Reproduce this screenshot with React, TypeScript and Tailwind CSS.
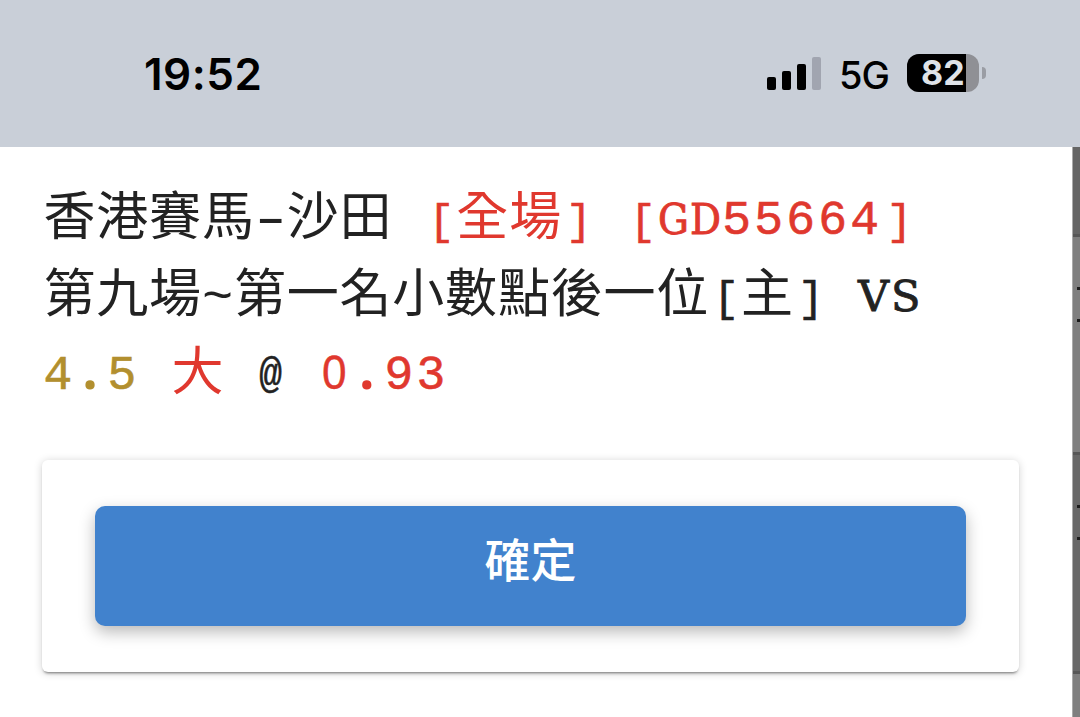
import type { ReactNode } from "react";

const bars = ["h-[13px]", "h-[19px]", "h-[26px]"];

// Rows of the page that stays dimmed behind the dialog
const rows = [
  { size: "h-[90px]", color: "bg-[#656565]", ticks: false },
  { size: "h-[218px]", color: "bg-[#7f7f7f]", ticks: true },
  { size: "h-[219px]", color: "bg-[#686868]", ticks: true },
  { size: "h-[46px]", color: "bg-[#7f7f7f]", ticks: false },
];

type Props = { children: ReactNode };

const Digits = ({ children }: Props) => (
  <span className="align-[1px] text-[48px] leading-none tracking-[3.2px] [-webkit-text-stroke:0.6px_currentColor]">
    {children}
  </span>
);

// The mono face has a dotted zero, so this one comes from the sans
const Zero = () => (
  <span className="inline-block w-[32px] pr-[5px] text-center align-[1px] font-['Liberation_Sans',sans-serif] text-[48px] leading-none tracking-normal [-webkit-text-stroke:0.4px_currentColor]">
    <span className="inline-block scale-x-92">0</span>
  </span>
);

const Dot = () => (
  <span className="inline-block w-[32px] pr-[3px] text-center align-[1px] font-['Noto_Sans',sans-serif] text-[60px] leading-none font-semibold tracking-normal">
    .
  </span>
);

const Bracket = ({ children }: Props) => (
  <span className="inline-block w-[32px] pl-[2px] text-center align-[1px] text-[43px] leading-none tracking-normal [-webkit-text-stroke:0.6px_currentColor]">
    {children}
  </span>
);

const StatusBar = () => (
  <header className="flex h-[147px] shrink-0 items-start justify-between bg-[#c9cfd8] pt-[52px] pr-[94px] pl-[144px] font-['Inter',sans-serif] text-black">
    <time className="text-[44px] leading-[44px] font-semibold tracking-[0.5px]">19:52</time>
    <div className="flex h-[42px] items-center">
      <div className="flex h-[34px] items-end gap-[6px]">
        {bars.map((h) => (
          <span key={h} className={`${h} w-[9px] rounded-[2px] bg-black`} />
        ))}
        <span className="h-[33px] w-[9px] rounded-[2px] bg-[#a1a5b0]" />
      </div>
      <span className="ml-[18px] pt-[3px] text-[38px] leading-[42px] font-medium tracking-[-1px]">5G</span>
      <div className="ml-[18px] flex items-center">
        <div className="flex h-[38px] w-[72px] items-center rounded-[12px] bg-[#8f9095]">
          <span className="h-full w-[59px] rounded-l-[12px] bg-black pl-[14px] text-[34px] leading-[38px] font-bold text-[#dfe3e8]">
            82
          </span>
        </div>
        <span className="ml-[3px] h-[12px] w-[4px] rounded-r-full bg-[#9a9da4]" />
      </div>
    </div>
  </header>
);

const App = () => {
  return (
    <div className="flex h-[717px] w-[1080px] flex-col overflow-hidden bg-white">
      <StatusBar />
      <main className="flex flex-1">
        <section className="w-[1072px] bg-white pt-[36px] pl-[42px]">
          <div className="pl-[1.5px] font-['Liberation_Mono','Noto_Sans_CJK_TC',monospace] text-[52px] leading-[77px] tracking-[0.8px] whitespace-pre text-[#222]">
            <p className="h-[77px]">
              香港賽馬
              <span className="inline-block w-[32px] text-center font-['Liberation_Sans',sans-serif] leading-none tracking-normal">
                <span className="inline-block scale-x-170">-</span>
              </span>
              沙田{" "}
              <span className="text-[#e0382e]">
                <Bracket>[</Bracket>全場<Bracket>]</Bracket> <Bracket>[</Bracket>
                <span className="align-[1px] font-['DejaVu_Serif_Condensed','DejaVu_Serif',serif] text-[43px] leading-none tracking-[1.2px] font-stretch-condensed [-webkit-text-stroke:0.8px_currentColor]">
                  GD
                </span>
                <Digits>55664</Digits>
                <Bracket>]</Bracket>
              </span>
            </p>
            <p className="h-[76px]">
              第九場~第一名小數點後一位<Bracket>[</Bracket>主<Bracket>]</Bracket>{" "}
              <span className="align-[1px] font-['DejaVu_Serif',serif] text-[43px] leading-none tracking-[2px] [-webkit-text-stroke:0.8px_currentColor]">
                VS
              </span>
            </p>
            <p className="h-[77px]">
              <span className="text-[#b28f2e]">
                <Digits>4</Digits>
                <Dot />
                <Digits>5</Digits>
              </span>{" "}
              <span className="text-[#e0382e]">大</span>{" "}
              <span className="inline-block w-[32px] pr-[4px] text-center align-[3px] text-[42px] leading-none tracking-normal [-webkit-text-stroke:0.5px_currentColor]">
                <span className="inline-block scale-x-90">@</span>
              </span>{" "}
              <span className="text-[#e0382e]">
                <Zero />
                <Dot />
                <Digits>93</Digits>
              </span>
            </p>
          </div>

          <div className="mt-[47px] h-[212px] w-[977px] rounded-[6px] bg-white px-[53px] pt-[46px] shadow-[0_3px_3px_-2px_rgba(0,0,0,0.5),0_1px_8px_rgba(0,0,0,0.18)]">
            <button className="h-[120px] w-[871px] rounded-[10px] bg-[#4182cd] pb-[17px] text-center font-['Noto_Sans_CJK_TC',sans-serif] text-[46px] font-medium text-white shadow-[0_6px_16px_rgba(0,0,0,0.28)]">
              確定
            </button>
          </div>
        </section>

        <aside className="w-[8px] border-l border-[#aaa]">
          {rows.map((row, i) => (
            <div
              key={i}
              className={`${row.size} ${row.color} flex flex-col items-end gap-[29px] border-b-3 border-[#575757] pt-[50px]`}
            >
              {row.ticks && <span className="h-[3px] w-[3px] bg-[#1c1c1c]" />}
              {row.ticks && <span className="h-[3px] w-[3px] bg-[#1c1c1c]" />}
            </div>
          ))}
        </aside>
      </main>
    </div>
  );
};

export default App;
